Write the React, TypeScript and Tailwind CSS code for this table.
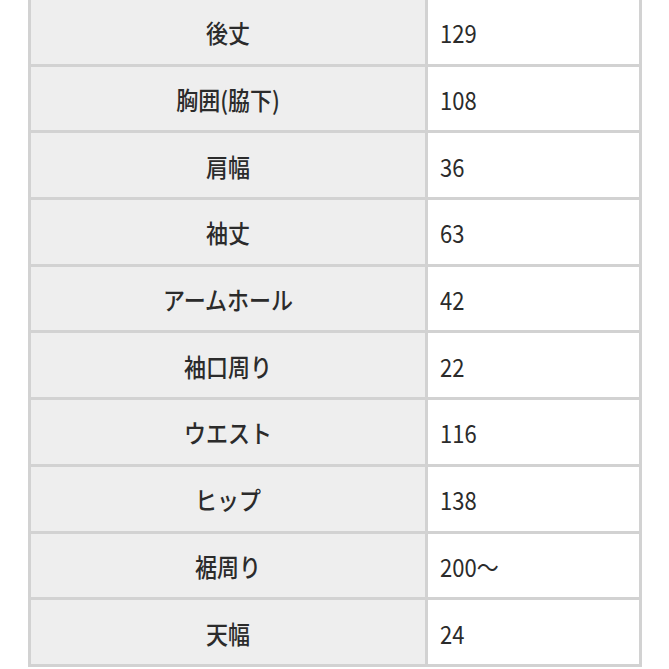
const rows = [
  { label: "後丈", value: "129" },
  { label: "胸囲(脇下)", value: "108" },
  { label: "肩幅", value: "36" },
  { label: "袖丈", value: "63" },
  { label: "アームホール", value: "42" },
  { label: "袖口周り", value: "22" },
  { label: "ウエスト", value: "116" },
  { label: "ヒップ", value: "138" },
  { label: "裾周り", value: "200〜" },
  { label: "天幅", value: "24" },
];

export default function App() {
  return (
    <div className="h-[669px] w-[669px] overflow-hidden bg-white">
      <div
        className="ml-[28px] -mt-[3px] grid w-[614px] grid-cols-[394px_211px] gap-[3px] bg-[#d2d2d2] p-[3px] text-[#2b2b2b]"
        style={{ fontFamily: '"Noto Sans CJK JP", "Noto Sans", sans-serif' }}
      >
        {rows.map((r) => (
          <div key={r.label} className="contents">
            <div className="flex h-[63.7px] items-center justify-center bg-[#eeeeee] pt-[2px] text-[22px] font-medium">
              <span className="inline-block scale-y-[1.12]">{r.label}</span>
            </div>
            <div className="flex h-[63.7px] items-center bg-white pl-[12px] pt-[2px] text-[22px]">
              <span className="inline-block scale-y-[1.12]">{r.value}</span>
            </div>
          </div>
        ))}
      </div>
    </div>
  );
}
